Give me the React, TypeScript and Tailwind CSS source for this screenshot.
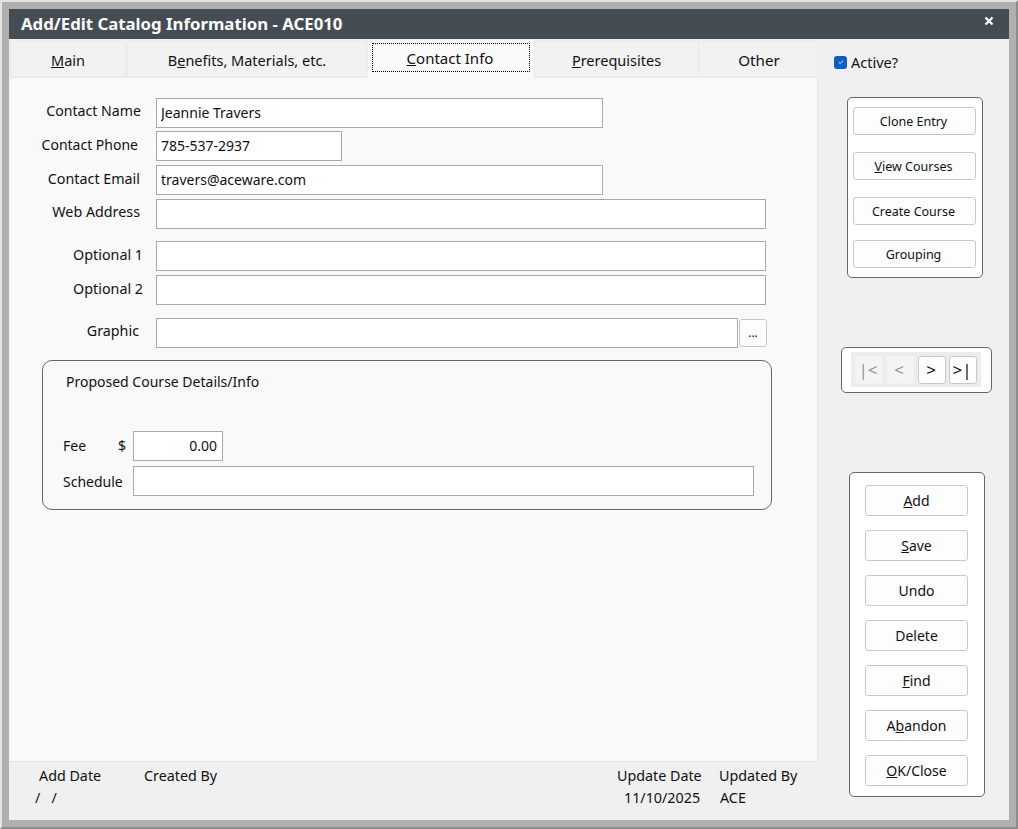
const font = "font-['Noto_Sans','Open_Sans',sans-serif]";

function Tab({ w, children }: { w: string; children: React.ReactNode }) {
  return (
    <div className={`${w} mr-px flex h-[37px] items-center justify-center border border-b-2 border-[#e9e9e9] bg-[#f2f2f2] pt-[3px] text-[14.5px] text-[#111]`}>
      {children}
    </div>
  );
}

function Field({ label, pad, width, value, className = '' }: { label: string; pad: string; width: string; value?: string; className?: string }) {
  return (
    <div className={`flex items-start ${className}`}>
      <label className={`w-[146px] shrink-0 text-right leading-[20px] text-[#111] ${pad}`}>{label}</label>
      <input
        type="text"
        defaultValue={value}
        className={`${width} h-[30px] border border-[#a9a9a9] bg-white px-[4px] pb-[2px] text-[14px] text-[#111] outline-none`}
      />
    </div>
  );
}

function SideButton({ w, h, small, mb, children }: { w: string; h: string; small?: boolean; mb: string; children: React.ReactNode }) {
  return (
    <button className={`${w} ${h} ${mb} block rounded-[3px] border border-[#c8c8c8] bg-[#fdfdfd] ${small ? 'pt-[2px] pr-[2px] text-[12.5px]' : 'text-[14px]'} text-[#111]`}>
      {children}
    </button>
  );
}

function NavButton({ off, mr, children }: { off?: boolean; mr: string; children: React.ReactNode }) {
  return (
    <button
      className={`${mr} flex h-[28px] w-[28px] items-center justify-center rounded-[3px] border pr-[2px] text-[17px] ${
        off ? 'border-[#f2f2f2] bg-[#f4f4f4] text-[#8a96a3]' : 'border-[#c8c8c8] bg-white text-[#111]'
      }`}
    >
      {children}
    </button>
  );
}

export default function App() {
  return (
    <div className={`${font} h-[829px] w-[1018px] overflow-hidden border-2 border-[#e4e4e4] border-r-[#8c8c8c] border-b-[#8c8c8c] bg-[#b0b0b0] pt-[7px] pr-[7px] pb-[7px] pl-[7px]`}>
      <div className="flex h-[811px] flex-col bg-[#f0f0f0]">
        {/* Title bar */}
        <div className="flex h-[30px] shrink-0 items-center justify-between bg-[#454c53] pr-[15px] pl-[12px]">
          <span className="text-[16.8px] font-bold text-white">Add/Edit Catalog Information - ACE010</span>
          <svg width="10" height="10" viewBox="0 0 10 10" className="mb-[6px]">
            <path d="M1.5 1.5 L8.5 8.5 M8.5 1.5 L1.5 8.5" stroke="white" strokeWidth="2.2" />
          </svg>
        </div>

        <div className="flex min-h-0 flex-1">
          {/* Left side */}
          <div className="flex w-[809px] shrink-0 flex-col pl-px">
            {/* Tabs */}
            <div className="flex h-[39px] shrink-0 items-end">
              <Tab w="w-[116px]"><span><span className="underline">M</span>ain</span></Tab>
              <Tab w="w-[240px]"><span>B<span className="underline">e</span>nefits, Materials, etc.</span></Tab>
              <div className="flex h-[38px] w-[166px] shrink-0 bg-[#f9f9f9] px-[4px] pt-[3px] pb-[6px]">
                <div className="flex w-full items-center justify-center border border-dotted border-black pt-[2px] pr-[2px] text-[15px] text-[#111]">
                  <span><span className="underline">C</span>ontact Info</span>
                </div>
              </div>
              <Tab w="w-[165px]"><span><span className="underline">P</span>rerequisites</span></Tab>
              <div className="flex h-[37px] flex-1 items-center justify-center border-t border-b-2 border-[#e9e9e9] bg-[#f2f2f2] pt-[3px] text-[15.2px] text-[#111]">Other</div>
            </div>

            {/* Form */}
            <div className="min-h-0 flex-1 border-r border-[#e9e9e9] bg-[#f9f9f9] pt-[20px]">
              <Field label="Contact Name" pad="pt-[3px] pr-[15px] text-[14.15px]" width="w-[447px]" value="Jeannie Travers" />
              <Field label="Contact Phone" pad="pt-[4px] pr-[18px] text-[14px]" width="w-[186px]" value="785-537-2937" className="mt-[3px]" />
              <Field label="Contact Email" pad="pt-[4px] pr-[16px] text-[14.3px]" width="w-[447px]" value="travers@aceware.com" className="mt-[4px]" />
              <Field label="Web Address" pad="pt-[3px] pr-[16px] text-[14.3px]" width="w-[610px]" className="mt-[4px]" />
              <Field label="Optional 1" pad="pt-[4px] pr-[13px] text-[14.3px]" width="w-[610px]" className="mt-[12px]" />
              <Field label="Optional 2" pad="pt-[4px] pr-[13px] text-[14.3px]" width="w-[610px]" className="mt-[4px]" />
              <div className="mt-[13px] flex items-start">
                <label className="w-[146px] shrink-0 pt-[3px] pr-[17px] text-right text-[14.3px] leading-[20px] text-[#111]">Graphic</label>
                <input type="text" className="h-[30px] w-[582px] border border-[#a9a9a9] bg-white outline-none" />
                <button className="mt-px ml-px h-[28px] w-[28px] rounded-[3px] border border-[#c8c8c8] bg-[#fdfdfd] text-[12px] text-[#111]">...</button>
              </div>

              {/* Proposed course */}
              <div className="mt-[12px] ml-[32px] h-[150px] w-[730px] rounded-[10px] border border-[#666] pt-[11px] pr-[17px] pl-[20px]">
                <div className="ml-[3px] text-[14px] leading-[20px] text-[#111]">Proposed Course Details/Info</div>
                <div className="mt-[39px] flex items-center">
                  <span className="w-[55px] pb-[2px] text-[14px] text-[#111]">Fee</span>
                  <span className="w-[15px] pb-[2px] text-[14px] text-[#111]">$</span>
                  <input
                    type="text"
                    defaultValue="0.00"
                    className="h-[30px] w-[90px] border border-[#a9a9a9] bg-white px-[5px] pb-[2px] text-right text-[14px] text-[#111] outline-none"
                  />
                </div>
                <div className="mt-[5px] flex items-center">
                  <span className="w-[70px] text-[14px] text-[#111]">Schedule</span>
                  <input type="text" className="h-[30px] w-[621px] border border-[#a9a9a9] bg-white outline-none" />
                </div>
              </div>
            </div>

            {/* Footer */}
            <div className="h-[59px] shrink-0 border-t border-[#e4e4e4] text-[14.3px] leading-[20px] text-[#111]">
              <div className="mt-[4px] flex">
                <span className="ml-[29px] w-[105px]">Add Date</span>
                <span className="w-[473px]">Created By</span>
                <span className="w-[102px]">Update Date</span>
                <span>Updated By</span>
              </div>
              <div className="mt-[2px] flex">
                <span className="ml-[25px] w-[589px]">/&nbsp;&nbsp;&nbsp;/</span>
                <span className="w-[96px]">11/10/2025</span>
                <span>ACE</span>
              </div>
            </div>
          </div>

          {/* Right side */}
          <div className="min-w-0 flex-1">
            <label className="mt-[16px] ml-[16px] flex h-[14px] items-center gap-[4px] text-[14.5px] leading-[14px] text-[#111]">
              <span className="flex h-[13px] w-[13px] items-center justify-center rounded-[3px] bg-[#0b5fc0]">
                <svg width="8" height="8" viewBox="0 0 9 9">
                  <path d="M2 4.8 L3.6 6.2 L7 3" fill="none" stroke="white" strokeWidth="1" />
                </svg>
              </span>
              <span>Active?</span>
            </label>

            <div className="mt-[28px] ml-[29px] h-[181px] w-[136px] rounded-[5px] border border-[#666] bg-white pt-[9px] pl-[5px]">
              <SideButton w="w-[123px]" h="h-[28px]" mb="mb-[17px]" small>Clone Entry</SideButton>
              <SideButton w="w-[123px]" h="h-[28px]" mb="mb-[17px]" small><span className="underline">V</span>iew Courses</SideButton>
              <SideButton w="w-[123px]" h="h-[28px]" mb="mb-[15px]" small>Create Course</SideButton>
              <SideButton w="w-[123px]" h="h-[28px]" mb="mb-0" small>Grouping</SideButton>
            </div>

            <div className="mt-[69px] ml-[23px] h-[46px] w-[151px] rounded-[5px] border border-[#666] bg-white pt-[4px] pl-[9px]">
              <div className="flex h-[35px] w-[130px] items-center bg-[#ececec] pl-[4px]">
                <NavButton off mr="mr-[3px]">|&lt;</NavButton>
                <NavButton off mr="mr-[4px]">&lt;</NavButton>
                <NavButton mr="mr-[3px]">&gt;</NavButton>
                <NavButton mr="mr-0">&gt;|</NavButton>
              </div>
            </div>

            <div className="mt-[79px] ml-[31px] h-[325px] w-[136px] rounded-[5px] border border-[#666] bg-white pt-[12px] pl-[15px]">
              <SideButton w="w-[103px]" h="h-[31px]" mb="mb-[14px]"><span className="underline">A</span>dd</SideButton>
              <SideButton w="w-[103px]" h="h-[31px]" mb="mb-[14px]"><span className="underline">S</span>ave</SideButton>
              <SideButton w="w-[103px]" h="h-[31px]" mb="mb-[14px]">Undo</SideButton>
              <SideButton w="w-[103px]" h="h-[31px]" mb="mb-[14px]">Delete</SideButton>
              <SideButton w="w-[103px]" h="h-[31px]" mb="mb-[14px]"><span className="underline">F</span>ind</SideButton>
              <SideButton w="w-[103px]" h="h-[31px]" mb="mb-[14px]">A<span className="underline">b</span>andon</SideButton>
              <SideButton w="w-[103px]" h="h-[31px]" mb="mb-0"><span className="underline">O</span>K/Close</SideButton>
            </div>
          </div>
        </div>
      </div>
    </div>
  );
}
